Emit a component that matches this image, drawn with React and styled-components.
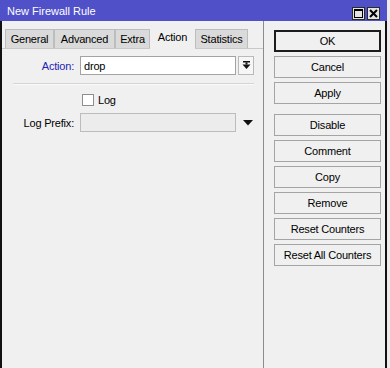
import React from 'react';
import styled, { createGlobalStyle } from 'styled-components';

const Global = createGlobalStyle`
  html, body { margin: 0; padding: 0; background: #ececec; }
  body { font-family: "Liberation Sans", Arial, sans-serif; font-size: 11px; letter-spacing: -0.2px; color: #000; }
`;

const Window = styled.div`
  width: 387px;
  height: 368px;
  display: flex;
  flex-direction: column;
  background: #f0f0f0;
`;

const TitleBar = styled.div`
  height: 21px;
  flex: none;
  background: #5050c8;
  display: flex;
  align-items: center;
  padding: 0 7px 0 7px;
  box-sizing: border-box;
`;

const Title = styled.span`
  color: #fff;
  font-size: 11px;
  letter-spacing: 0;
  margin-top: 1px;
`;

const TitleButtons = styled.div`
  margin-left: auto;
  display: flex;
  gap: 2px;
  align-self: flex-start;
  margin-top: 7px;
`;

const TitleBtn = styled.div`
  width: 13px;
  height: 13px;
  box-sizing: border-box;
  background: #e4e4e4;
  border: 1px solid #2a2a2a;
  display: flex;
  align-items: center;
  justify-content: center;
`;

const Body = styled.div`
  flex: 1;
  display: flex;
  border-left: 2px solid #111;
  border-right: 2px solid #111;
  min-height: 0;
`;

const LeftPane = styled.div`
  width: 261px;
  flex: none;
  display: flex;
  flex-direction: column;
  border-right: 1px solid #8c8c8c;
`;

const TabStrip = styled.div`
  height: 27px;
  flex: none;
  display: flex;
  align-items: flex-end;
  padding-left: 3px;
  position: relative;
  z-index: 1;
`;

const Tab = styled.div`
  width: ${p => p.$w}px;
  height: ${p => (p.$active ? 22 : 19)}px;
  box-sizing: border-box;
  display: flex;
  align-items: center;
  justify-content: center;
  background: ${p => (p.$active ? '#f0f0f0' : '#dadada')};
  border: 1px solid ${p => (p.$active ? '#f0f0f0' : '#bdbdbd')};
  border-bottom: none;
  margin-bottom: ${p => (p.$active ? '-1px' : '0')};
  font-size: 11px;
  padding-bottom: ${p => (p.$active ? '3px' : '0')};
`;

const Panel = styled.div`
  flex: 1;
  border-top: 1px solid #c8c8c8;
  padding-top: 7px;
  display: flex;
  flex-direction: column;
`;

const FieldRow = styled.div`
  display: flex;
  align-items: center;
  height: 19px;
  margin-top: ${p => p.$mt || 0}px;
`;

const Label = styled.span`
  width: 72px;
  margin-right: 6px;
  text-align: right;
  color: ${p => (p.$blue ? '#2323b4' : '#000')};
`;

const TextBox = styled.div`
  width: ${p => p.$w || 156}px;
  height: 19px;
  box-sizing: border-box;
  border: 1px solid ${p => (p.$disabled ? '#bcbcbc' : '#a3a3a3')};
  background: ${p => (p.$disabled ? '#ececec' : '#fff')};
  padding-left: 3px;
  display: flex;
  align-items: center;
`;

const DropBtn = styled.div`
  width: 16px;
  height: 19px;
  box-sizing: border-box;
  margin-left: 2px;
  border: 1px solid #b9b9b9;
  background: #f6f6f6;
  display: flex;
  align-items: center;
  justify-content: center;
`;

const Arrow = styled.div`
  margin-left: 7px;
  display: flex;
  align-items: center;
`;

const Separator = styled.div`
  height: 1px;
  margin: 8px 9px 0 11px;
  background: #d4d4d4;
  border-bottom: 1px solid #fafafa;
`;

const CheckRow = styled.label`
  display: flex;
  align-items: center;
  margin: 9px 0 0 80px;
  height: 12px;
`;

const CheckBox = styled.span`
  width: 12px;
  height: 12px;
  box-sizing: border-box;
  border: 1px solid #8e8e8e;
  background: #fff;
  margin-right: 4px;
`;

const RightPane = styled.div`
  flex: 1;
  padding: 9px 0 0 10px;
  display: flex;
  flex-direction: column;
`;

const ButtonGroup = styled.div`
  display: flex;
  flex-direction: column;
  gap: 4px;
  margin-top: ${p => p.$mt || 0}px;
`;

const Button = styled.div`
  width: 107px;
  height: 22px;
  box-sizing: border-box;
  border: ${p => (p.$default ? '2px solid #1c1c1c' : '1px solid #a4a4a4')};
  background: #f0f0f0;
  display: flex;
  align-items: center;
  justify-content: center;
`;

const tabs = [
  ['General', 49],
  ['Advanced', 61],
  ['Extra', 35],
  ['Action', 45],
  ['Statistics', 53],
];

export default function App() {
  return (
    <>
      <Global />
      <Window>
        <TitleBar>
          <Title>New Firewall Rule</Title>
          <TitleButtons>
            <TitleBtn>
              <svg width="9" height="9" viewBox="0 0 9 9">
                <rect x="0.5" y="0.5" width="8" height="8" fill="none" stroke="#000" />
                <rect x="0" y="0" width="9" height="2" fill="#000" />
              </svg>
            </TitleBtn>
            <TitleBtn>
              <svg width="9" height="9" viewBox="0 0 9 9">
                <path d="M1 1 L8 8 M8 1 L1 8" stroke="#000" strokeWidth="2" />
              </svg>
            </TitleBtn>
          </TitleButtons>
        </TitleBar>
        <Body>
          <LeftPane>
            <TabStrip>
              {tabs.map(([t, w]) => (
                <Tab key={t} $w={w} $active={t === 'Action'}>{t}</Tab>
              ))}
            </TabStrip>
            <Panel>
              <FieldRow>
                <Label $blue>Action:</Label>
                <TextBox>drop</TextBox>
                <DropBtn>
                  <svg width="9" height="9" viewBox="0 0 9 9">
                    <rect x="1" y="0" width="7" height="1.5" fill="#111" />
                    <rect x="3.5" y="1.5" width="2" height="2" fill="#111" />
                    <polygon points="0.5,3.5 8.5,3.5 4.5,8" fill="#111" />
                  </svg>
                </DropBtn>
              </FieldRow>
              <Separator />
              <CheckRow>
                <CheckBox />
                Log
              </CheckRow>
              <FieldRow $mt={7}>
                <Label>Log Prefix:</Label>
                <TextBox $disabled $w={156} />
                <Arrow>
                  <svg width="10" height="6" viewBox="0 0 10 6">
                    <polygon points="0,0 10,0 5,5.5" fill="#111" />
                  </svg>
                </Arrow>
              </FieldRow>
            </Panel>
          </LeftPane>
          <RightPane>
            <ButtonGroup>
              <Button $default>OK</Button>
              <Button>Cancel</Button>
              <Button>Apply</Button>
            </ButtonGroup>
            <ButtonGroup $mt={10}>
              <Button>Disable</Button>
              <Button>Comment</Button>
              <Button>Copy</Button>
              <Button>Remove</Button>
              <Button>Reset Counters</Button>
              <Button>Reset All Counters</Button>
            </ButtonGroup>
          </RightPane>
        </Body>
      </Window>
    </>
  );
}
